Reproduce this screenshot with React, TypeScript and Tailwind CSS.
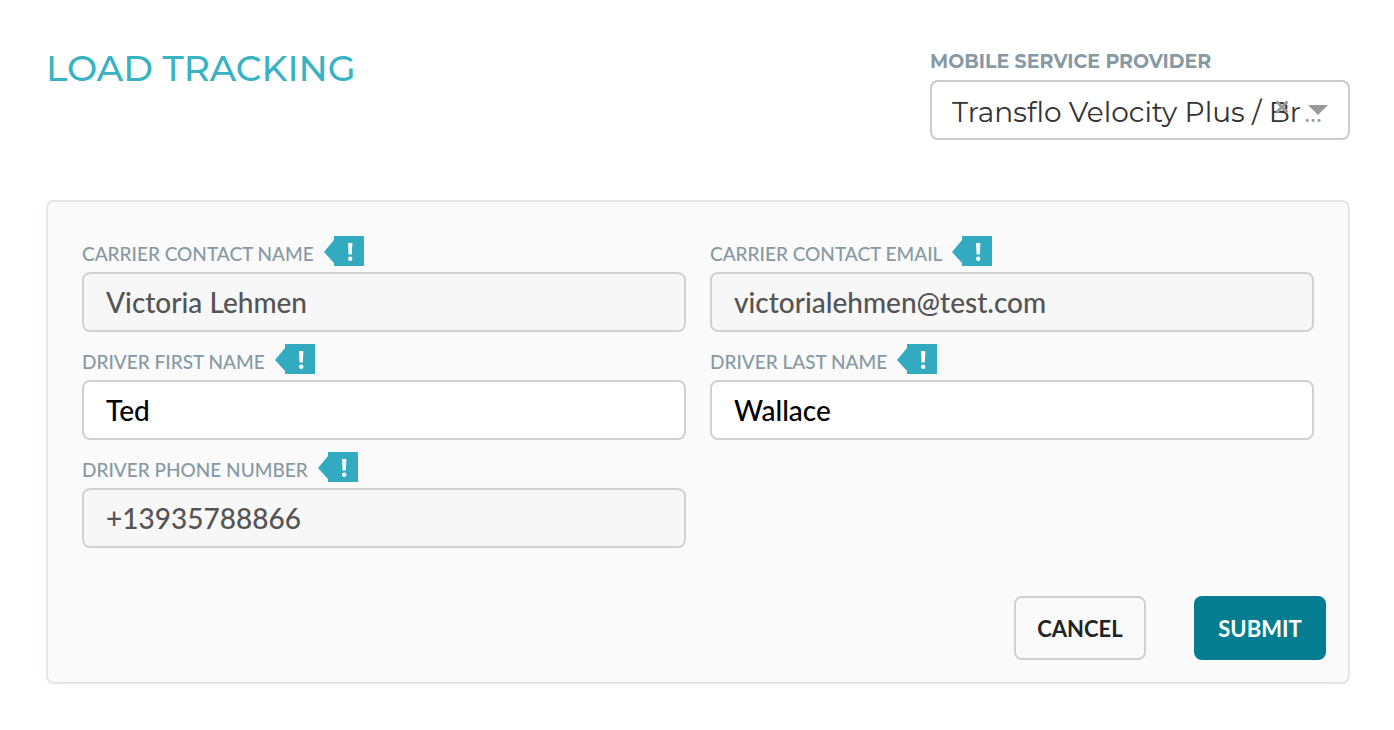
import React, { useState } from 'react';

interface Field {
  id: string;
  label: string;
  value: string;
  type: string;
  locked: boolean;
}

const fields: Field[] = [
  { id: 'carrier-name', label: 'CARRIER CONTACT NAME', value: 'Victoria Lehmen', type: 'text', locked: true },
  { id: 'carrier-email', label: 'CARRIER CONTACT EMAIL', value: 'victorialehmen@test.com', type: 'email', locked: true },
  { id: 'driver-first', label: 'DRIVER FIRST NAME', value: 'Ted', type: 'text', locked: false },
  { id: 'driver-last', label: 'DRIVER LAST NAME', value: 'Wallace', type: 'text', locked: false },
  { id: 'driver-phone', label: 'DRIVER PHONE NUMBER', value: '+13935788866', type: 'tel', locked: true },
];

const RequiredFlag = () => (
  <svg className="h-[30px] w-10 shrink-0" viewBox="0 0 40 30" aria-hidden="true">
    <path d="M10 0H40V30H10V27L0 16L10 4Z" fill="#32aabf" />
    <path d="M24 7H28.4L27.8 18.4H24.6Z" fill="#fff" />
    <circle cx="26.2" cy="22.7" r="2.2" fill="#fff" />
  </svg>
);

const FormField: React.FC<{ field: Field }> = ({ field }) => {
  const [value, setValue] = useState(field.value);

  return (
    <div>
      <div className="mb-1.5 flex h-[30px] items-start gap-2.5">
        <label htmlFor={field.id} className="pt-1 text-[19px] leading-7 font-medium text-[#8799a3]">{field.label}</label>
        <RequiredFlag />
      </div>
      <input
        id={field.id}
        type={field.type}
        value={value}
        readOnly={field.locked}
        onChange={(e) => setValue(e.target.value)}
        className={`block h-[60px] w-full rounded-lg border-2 border-[#d1d1d1] px-[22px] text-[28px] font-medium outline-none ${field.locked ? 'bg-[#f7f7f7] text-[#545454]' : 'bg-white text-black'}`}
      />
    </div>
  );
};

const ProviderSelect = () => (
  <div className="w-[420px] font-['Montserrat','Inter',sans-serif]">
    <label htmlFor="provider" className="block pb-1 text-[19px] leading-7 font-bold text-[#8799a3]">MOBILE SERVICE PROVIDER</label>
    <div className="relative">
      <select id="provider" className="block h-[60px] w-full appearance-none rounded-lg border-2 border-[#ccc] bg-white pt-1 pl-5 text-[28px] text-[#333] outline-none">
        <option>Transflo Velocity Plus / Br</option>
      </select>
      <span className="pointer-events-none absolute right-7 bottom-2.5 text-[28px] leading-9 text-[#999]">...</span>
      <button type="button" aria-label="Clear" className="absolute top-5 right-[61px]">
        <svg className="size-3.5" viewBox="0 0 14 14" stroke="#999" strokeWidth="3">
          <path d="M1.5 1.5L12.5 12.5M12.5 1.5L1.5 12.5" />
        </svg>
      </button>
      <svg className="pointer-events-none absolute top-[25px] right-[22px] h-2.5 w-5" viewBox="0 0 20 10" fill="#999" aria-hidden="true">
        <path d="M0 0H20L10 10Z" />
      </svg>
    </div>
  </div>
);

export default function App() {
  return (
    <main className="min-h-screen bg-white pt-12 pr-11 pb-11 pl-[46px] font-['Lato',sans-serif]">
      <header className="mb-[60px] flex items-start justify-between">
        <h1 className="font-['Montserrat','Inter',sans-serif] text-[36px] leading-10 font-medium text-[#38b3c3]">LOAD TRACKING</h1>
        <ProviderSelect />
      </header>

      <form onSubmit={(e) => e.preventDefault()} className="rounded-lg border-2 border-[#e1e6e6] bg-[#fafafa] p-[22px] pt-[34px]">
        <div className="grid grid-cols-2 gap-x-6 gap-y-3 px-3">
          {fields.map((field) => (
            <FormField key={field.id} field={field} />
          ))}
        </div>
        <div className="mt-12 flex justify-end gap-12">
          <button type="button" className="h-16 w-[132px] rounded-lg border-2 border-[#d1d1d1] text-[22px] font-bold text-[#222]">CANCEL</button>
          <button type="submit" className="h-16 w-[132px] rounded-lg bg-[#037d8f] text-[22px] font-bold text-white">SUBMIT</button>
        </div>
      </form>
    </main>
  );
}
